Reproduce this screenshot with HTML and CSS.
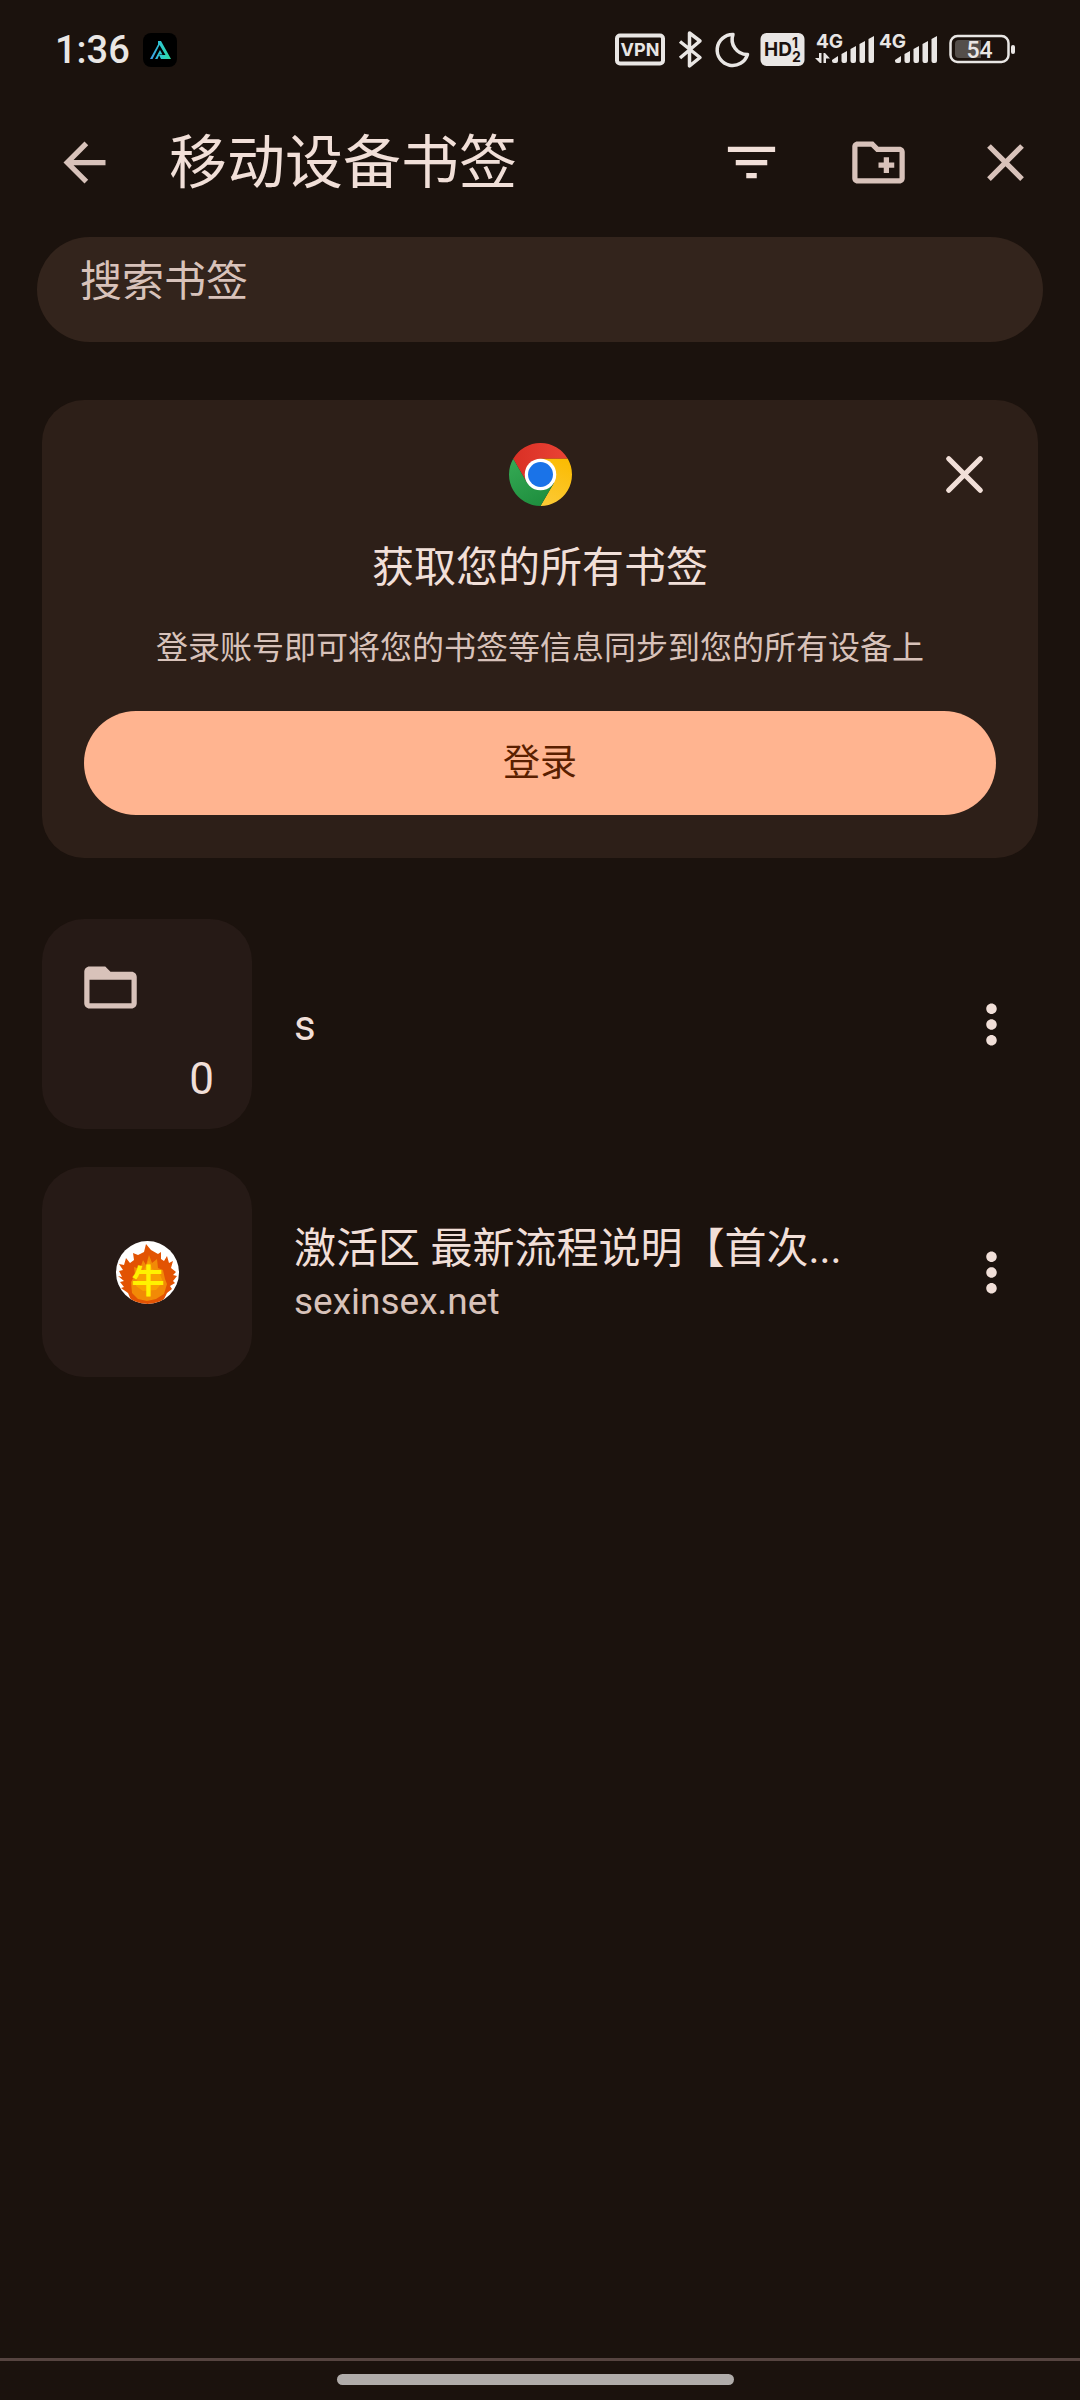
FILE: index.html
```html
<!DOCTYPE html>
<html lang="zh-CN">
<head>
<meta charset="utf-8">
<meta name="viewport" content="width=device-width, initial-scale=1">
<title>移动设备书签</title>
<link rel="stylesheet" href="styles.css">
</head>
<body>
<div class="status">
  <span class="clock">1:36</span>
  <svg class="app-badge" width="34" height="34" viewBox="0 0 34 34" aria-hidden="true">
    <defs><linearGradient id="peak" x1="0" x2="1"><stop offset="0" stop-color="#3f9be8"/><stop offset=".5" stop-color="#2cc8cf"/><stop offset="1" stop-color="#2fdc9c"/></linearGradient></defs>
    <rect width="34" height="34" rx="8"/>
    <path fill="url(#peak)" d="M15 8h3l10 18H18l-2-4h6.500L16.500 12 9.500 26H7l8-14.500zM12 26l5-9 2.500 4.500h-3L14.500 26z"/>
  </svg>
  <svg class="status-icons" width="404" height="40" viewBox="612 30 404 40" aria-hidden="true">
    <g fill="none" stroke="#e9e6e4">
      <rect x="617" y="35.500" width="46" height="28" rx="3" stroke-width="4"/>
      <path stroke-width="3.500" stroke-linejoin="round" d="M680 41.500l20 16-10.500 8.500v-33l10.500 8-20 17"/>
      <path stroke-width="3.500" stroke-linejoin="round" d="M733 34.500A15.500 15.500 0 1 0 747.500 54.500 15 15 0 0 1 733 34.500z"/>
    </g>
    <text class="label" x="640" y="56" font-size="18" text-anchor="middle">VPN</text>
    <rect x="760.500" y="33" width="44" height="33" rx="6" fill="#e9e6e4"/>
    <text class="label dark" x="764" y="56" font-size="19">HD</text>
    <text class="label dark" x="792" y="48" font-size="14">1</text>
    <text class="label dark" x="792" y="62" font-size="14">2</text>
    <text class="label" x="816" y="48" font-size="19">4G</text>
    <text class="label" x="879" y="48" font-size="19">4G</text>
    <g fill="#e9e6e4">
      <path d="M819 53h2.500v10H820l-5-5h4zM823.500 53h1.500l5 5.500h-4V63h-2.500z"/>
      <path id="bars" d="M832 60l6-4v5q0 2-2 2h-2q-2 0-2-2zM841.500 54l5.500-3v10q0 2-2 2h-1.500q-2 0-2-2zM850.500 49l5.500-3v15q0 2-2 2h-1.500q-2 0-2-2zM859.500 44l5.500-3v20q0 2-2 2h-1.500q-2 0-2-2zM868.500 39l5.500-3v25q0 2-2 2h-1.500q-2 0-2-2z"/>
      <use href="#bars" x="63"/>
      <rect x="1011" y="45" width="4" height="9" rx="2"/>
    </g>
    <rect x="950.500" y="36" width="58" height="26" rx="7" fill="none" stroke="#e9e6e4" stroke-width="2.500"/>
    <path fill="#544e4a" d="M959 40h22v18h-22q-4 0-4-4V44q0-4 4-4z"/>
    <text class="charge" x="979.500" y="58" font-size="23" text-anchor="middle">54</text>
  </svg>
</div>

<header class="toolbar">
  <button class="icon-button muted" aria-label="返回"><svg viewBox="0 0 24 24"><path d="M20 11H7.830l5.590-5.590L12 4l-8 8 8 8 1.410-1.410L7.830 13H20v-2z"/></svg></button>
  <h1>移动设备书签</h1>
  <button class="icon-button" aria-label="排序"><svg viewBox="0 0 24 24"><path d="M10 18h4v-2h-4v2zM3 6v2h18V6H3zm3 7h12v-2H6v2z"/></svg></button>
  <button class="icon-button muted" aria-label="新建文件夹"><svg viewBox="0 0 24 24"><path d="M20 6h-8l-2-2H4c-1.110 0-1.990.890-1.990 2L2 18c0 1.110.890 2 2 2h16c1.110 0 2-.890 2-2V8c0-1.110-.890-2-2-2zm0 12H4V6h5.170l2 2H20v10zm-8-4h2v2h2v-2h2v-2h-2v-2h-2v2h-2z"/></svg></button>
  <button class="icon-button muted" aria-label="关闭"><svg viewBox="0 0 24 24"><path d="M19 6.410L17.590 5 12 10.590 6.410 5 5 6.410 10.590 12 5 17.590 6.410 19 12 13.410 17.590 19 19 17.590 13.410 12z"/></svg></button>
</header>

<main>
  <input class="search" type="search" placeholder="搜索书签" aria-label="搜索书签">

  <section class="promo">
    <button class="icon-button promo-close" aria-label="关闭提示"><svg viewBox="0 0 24 24"><path class="cross" d="M6 6l12 12M18 6L6 18"/></svg></button>
    <svg class="chrome" viewBox="0 0 48 48" aria-hidden="true">
      <defs>
        <linearGradient id="red" x1="0" x2="1"><stop stop-color="#d93025"/><stop offset="1" stop-color="#ea4335"/></linearGradient>
        <linearGradient id="yellow" x1=".3" y1="1" x2=".6" y2="0"><stop stop-color="#fcc934"/><stop offset="1" stop-color="#fbbc04"/></linearGradient>
        <linearGradient id="green" x1=".7" y1="1" x2=".2" y2="0"><stop stop-color="#1e8e3e"/><stop offset="1" stop-color="#34a853"/></linearGradient>
      </defs>
      <path fill="url(#red)" d="M24 12h20.780a24 24 0 0 0-41.570 0L13.610 30z"/>
      <path fill="url(#yellow)" d="M34.390 30L24 48A24 24 0 0 0 44.780 12H24z"/>
      <path fill="url(#green)" d="M13.610 30L3.220 12A24 24 0 0 0 24 48l10.390-18z"/>
      <circle cx="24" cy="24" r="12" fill="#fff"/><circle cx="24" cy="24" r="9.500" fill="#1a73e8"/>
    </svg>
    <h2>获取您的所有书签</h2>
    <p>登录账号即可将您的书签等信息同步到您的所有设备上</p>
    <button class="sign-in">登录</button>
  </section>

  <ul class="bookmarks">
    <li>
      <div class="tile folder">
        <svg viewBox="0 0 24 24" aria-hidden="true"><path d="M9.200 4H4c-1.100 0-1.990.900-1.990 2L2 18c0 1.100.900 2 2 2h16c1.100 0 2-.900 2-2V8c0-1.100-.900-2-2-2h-8l-2-2zM20 18H4V9h16z"/></svg>
        <span class="count">0</span>
      </div>
      <div class="info"><a class="name" href="#s">s</a></div>
      <button class="icon-button" aria-label="s 的选项"><svg viewBox="0 0 24 24"><path d="M12 8c1.100 0 2-.900 2-2s-.900-2-2-2-2 .900-2 2 .900 2 2 2zm0 2c-1.100 0-2 .900-2 2s.900 2 2 2 2-.900 2-2-.900-2-2-2zm0 6c-1.100 0-2 .900-2 2s.900 2 2 2 2-.900 2-2-.900-2-2-2z"/></svg></button>
    </li>
    <li>
      <div class="tile">
        <svg class="favicon" viewBox="0 0 63 63" aria-hidden="true">
          <defs><clipPath id="round"><circle cx="31.500" cy="31.500" r="31.500"/></clipPath></defs>
          <g clip-path="url(#round)">
            <rect width="63" height="63" fill="#fff"/>
            <path fill="#e25303" d="M30 3l5 6 7 4 3-2v7l3 2 3-5 2 7 4-2-2 7 5 4-3 3 4 1-4 5 2 2-5 3 2 3-5 4-3 6-8 7H24l-9-6-3-7-7-5 3-1-4-5 4-1-6-5 4 1-3-6 4-1-4-6 5 1 2-7 4 5 4-3-1-7 5 2 6-3z"/>
            <path fill="#f28a06" d="M33 14l3 8 5-4 1 9 5 2 2 9 2 5-3 10-8 5-9 2-9-2-6-6-1-11 4-7-1-8 6 2 3-9 3 5z"/>
            <path fill="#f9a000" d="M33 19l-4 8-7 8-2 10 7 5 13-1 7-8-4-10-7-3z"/>
          </g>
          <text class="ox" x="32" y="52" text-anchor="middle">牛</text>
        </svg>
      </div>
      <div class="info"><a class="name" href="#guide">激活区 最新流程说明【首次...</a><span class="host">sexinsex.net</span></div>
      <button class="icon-button" aria-label="激活区的选项"><svg viewBox="0 0 24 24"><path d="M12 8c1.100 0 2-.900 2-2s-.900-2-2-2-2 .900-2 2 .900 2 2 2zm0 2c-1.100 0-2 .900-2 2s.900 2 2 2 2-.900 2-2-.900-2-2-2zm0 6c-1.100 0-2 .900-2 2s.900 2 2 2 2-.900 2-2-.900-2-2-2z"/></svg></button>
    </li>
  </ul>
</main>

<footer class="nav"><div class="handle"></div></footer>
</body>
</html>
```
FILE: styles.css
```css
* { box-sizing: border-box; }

body {
  margin: 0;
  min-height: 100vh;
  display: flex;
  flex-direction: column;
  background: #1b120d;
  color: #f1dfd8;
  font-family: Roboto, "Noto Sans CJK SC", sans-serif;
}

h1, h2, p, ul { margin: 0; padding: 0; font-weight: 400; }
button, input { font: inherit; color: inherit; border: 0; padding: 0; }
button { background: none; }

.status {
  display: flex;
  align-items: center;
  height: 100px;
  padding: 0 64px 0 55px;
}
.clock {
  width: 70px;
  color: #e9e6e4;
  font-size: 38px;
  font-weight: 500;
  line-height: 40px;
  white-space: nowrap;
}
.app-badge { margin-left: 18px; }
.status-icons { margin-left: auto; }
.label {
  fill: #e9e6e4;
  font-family: Inter, sans-serif;
  font-weight: 700;
}
.label.dark { fill: #1b120e; }
.charge { fill: #e9e6e4; font-family: Roboto, sans-serif; font-weight: 500; }

.toolbar {
  display: flex;
  align-items: center;
  gap: 64px;
  height: 125px;
  padding: 0 43px 0 53px;
}
.toolbar h1 {
  flex: 1;
  margin-left: -11px;
  font-size: 58px;
  line-height: 64px;
}

.icon-button { flex: none; width: 63px; height: 63px; }
.icon-button svg { display: block; width: 100%; height: 100%; fill: #f1dfd8; }
.icon-button.muted svg { fill: #d8c2ba; }
.cross { fill: none; stroke: #f1dfd8; stroke-width: 2; stroke-linecap: round; }

main { flex: 1; padding: 12px 42px 0; }

.search {
  display: block;
  width: calc(100% + 10px);
  height: 105px;
  margin: 0 -5px;
  padding: 0 43px 16px;
  border-radius: 53px;
  background: #33241c;
  font-size: 42px;
  outline: 0;
  appearance: none;
}
.search::placeholder { color: #d8c2ba; opacity: 1; }

.promo {
  position: relative;
  display: flex;
  flex-direction: column;
  align-items: center;
  margin-top: 58px;
  padding: 43px 42px;
  border-radius: 42px;
  background: #2d1f18;
  text-align: center;
}
.promo-close { position: absolute; top: 43px; right: 42px; }
.chrome { width: 63px; height: 63px; }
.promo h2 { margin-top: 34px; font-size: 42px; line-height: 56px; }
.promo p { margin-top: 31px; color: #d8c2ba; font-size: 32px; line-height: 42px; }
.sign-in {
  align-self: stretch;
  height: 104px;
  margin-top: 42px;
  padding-bottom: 6px;
  border-radius: 52px;
  background: #ffb490;
  color: #5a1f00;
  font-size: 37px;
}

.bookmarks {
  display: flex;
  flex-direction: column;
  gap: 38px;
  margin-top: 61px;
  list-style: none;
}
.bookmarks li { display: flex; align-items: center; padding-right: 15px; }
.tile {
  display: flex;
  flex: none;
  align-items: center;
  justify-content: center;
  width: 210px;
  height: 210px;
  border-radius: 42px;
  background: #261a16;
}
.tile svg { width: 63px; height: 63px; fill: #d8c2ba; }
.folder {
  flex-direction: column;
  justify-content: space-between;
  align-items: flex-start;
  padding: 37px 38px 34px 37px;
}
.count {
  align-self: flex-end;
  font-size: 44px;
  line-height: 32px;
}
.ox {
  fill: #fff200;
  font-family: "Noto Sans CJK SC", sans-serif;
  font-size: 33px;
  font-weight: 700;
}
.info {
  display: flex;
  flex: 1;
  flex-direction: column;
  min-width: 0;
  padding: 3px 0 0 42px;
}
.name {
  overflow: hidden;
  color: inherit;
  font-size: 42px;
  line-height: 56px;
  text-decoration: none;
  text-overflow: ellipsis;
  white-space: nowrap;
}
.host { color: #d8c2ba; font-size: 37px; line-height: 50px; }

.nav {
  display: flex;
  justify-content: center;
  height: 42px;
  padding: 13px 9px 0 0;
  border-top: 3px solid #564440;
}
.handle { width: 37%; height: 11px; border-radius: 6px; background: #b0acaa; }
```
